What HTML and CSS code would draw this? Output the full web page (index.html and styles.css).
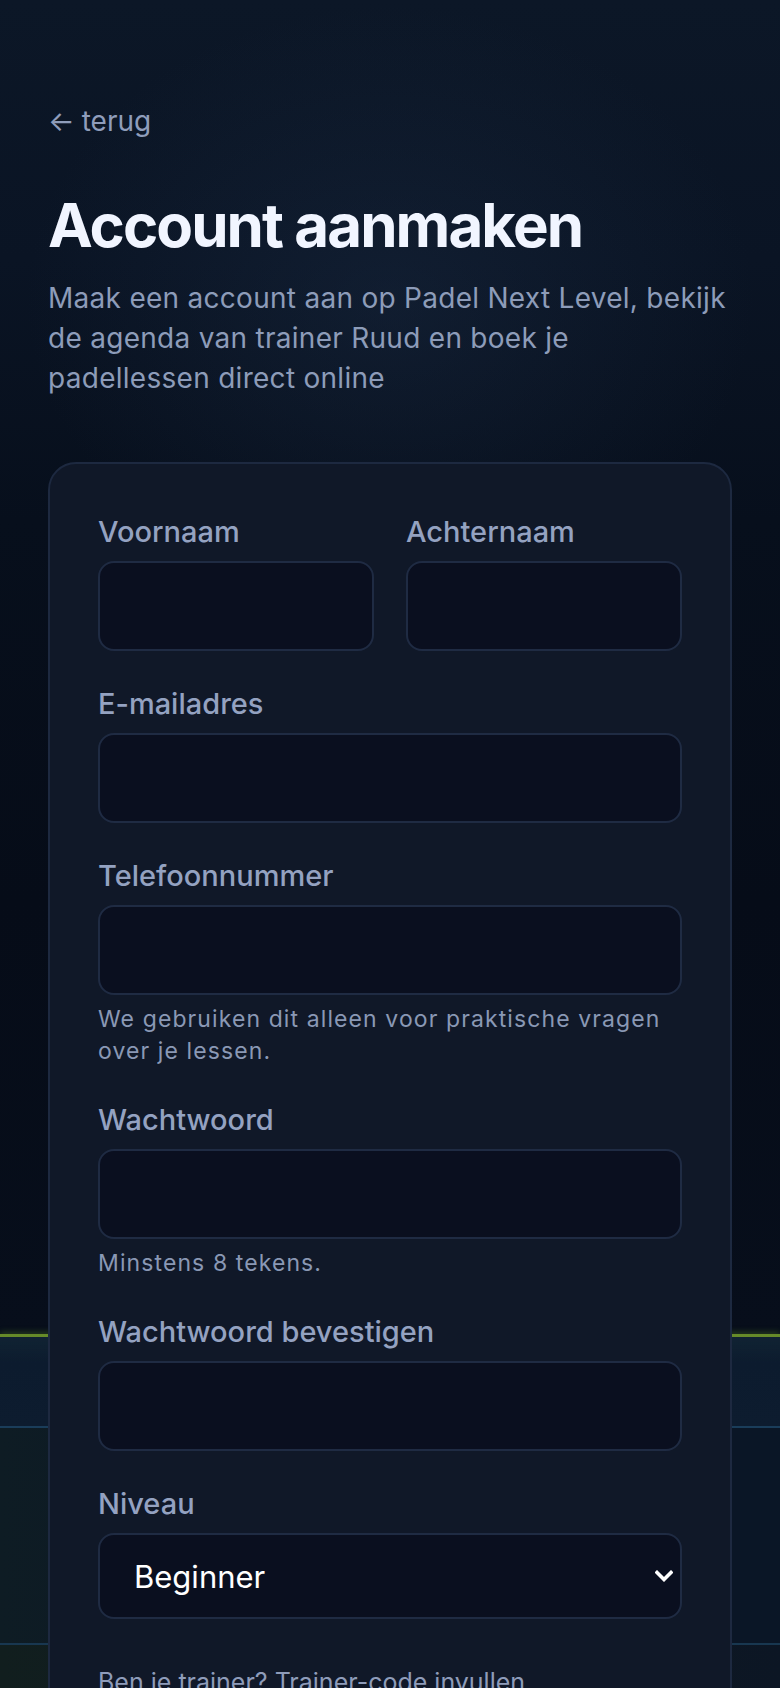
FILE: index.html
```html
<!DOCTYPE html>
<html lang="nl">
<head>
<meta charset="utf-8">
<title>Account aanmaken – Padel Next Level</title>
<link rel="stylesheet" href="styles.css">
</head>
<body>
<div class="court" aria-hidden="true">
  <div class="court-band band-a"></div>
  <div class="court-band band-b"></div>
  <div class="court-band band-c"></div>
</div>
<main class="page">
  <a class="back" href="#"><span class="back-arrow">←</span>terug</a>
  <h1 class="title">Account aanmaken</h1>
  <p class="intro">Maak een account aan op Padel Next Level, bekijk de agenda van trainer Ruud en boek je padellessen direct online</p>

  <form class="card">
    <div class="row">
      <div class="field">
        <label class="label" for="fn">Voornaam</label>
        <input class="input" id="fn" type="text">
      </div>
      <div class="field">
        <label class="label" for="ln">Achternaam</label>
        <input class="input" id="ln" type="text">
      </div>
    </div>
    <div class="field">
      <label class="label" for="em">E-mailadres</label>
      <input class="input" id="em" type="email">
    </div>
    <div class="field">
      <label class="label" for="tel">Telefoonnummer</label>
      <input class="input" id="tel" type="tel">
      <p class="help">We gebruiken dit alleen voor praktische vragen over je lessen.</p>
    </div>
    <div class="field">
      <label class="label" for="pw">Wachtwoord</label>
      <input class="input" id="pw" type="password">
      <p class="help">Minstens 8 tekens.</p>
    </div>
    <div class="field">
      <label class="label" for="pw2">Wachtwoord bevestigen</label>
      <input class="input" id="pw2" type="password">
    </div>
    <div class="field">
      <label class="label" for="lvl">Niveau</label>
      <div class="select-wrap">
        <select class="select" id="lvl">
          <option>Beginner</option>
          <option>Gevorderd</option>
          <option>Expert</option>
        </select>
        <svg class="chev" viewBox="0 0 18 12" width="18" height="12"><path d="M2 2.5 L9 9.5 L16 2.5" fill="none" stroke="#ffffff" stroke-width="3.6" stroke-linecap="square"/></svg>
      </div>
    </div>
    <p class="trainer">Ben je trainer? Trainer-code invullen</p>
    <button class="submit" type="submit">Account aanmaken</button>
  </form>
</main>
</body>
</html>
```

FILE: styles.css
```css
* { box-sizing: border-box; }

html { background: #070e1a; }

body {
  margin: 0;
  position: relative;
  min-height: 1688px;
  font-family: Inter, "Noto Sans", "Liberation Sans", sans-serif;
  color: #e8eefb;
  background:
    radial-gradient(ellipse 520px 420px at 50% 300px, rgba(30, 48, 74, 0.35), rgba(30, 48, 74, 0) 70%),
    linear-gradient(180deg, #0c1727 0px, #0a1424 260px, #070f1c 520px, #060c18 900px, #070e1b 1336px);
  background-repeat: no-repeat;
}

.court {
  position: absolute;
  left: 0;
  right: 0;
  top: 1334px;
  height: 420px;
  z-index: 0;
}

.court-band { width: 100%; }

.band-a {
  height: 94px;
  border-top: 3px solid rgba(132, 176, 40, 0.75);
  box-shadow: 0 -2px 6px rgba(132, 190, 40, 0.25);
  background: linear-gradient(180deg, rgba(24, 52, 70, 0.55), #0c1b2e 30%, #0d1c2f);
  border-bottom: 2px solid #1a3d5a;
}

.band-b {
  height: 217px;
  background: linear-gradient(90deg, #0e1c24 0%, #0c1826 40%, #0a1626 70%, #0a1626 100%);
  border-bottom: 2px solid #183750;
}

.band-c {
  height: 110px;
  background: linear-gradient(90deg, #111e1e 0%, #0f1a22 50%, #0c1624 100%);
}

.page {
  position: relative;
  z-index: 1;
  padding: 100px 48px 80px;
}

.back {
  display: inline-block;
  font-size: 28px;
  line-height: 42px;
  color: #8f9dbb;
  text-decoration: none;
}

.back-arrow {
  display: inline-block;
  margin-right: 7px;
}

.title {
  margin: 50px 0 20px;
  font-size: 60px;
  line-height: 66px;
  font-weight: 700;
  letter-spacing: -0.032em;
  color: #f1f5ff;
}

.intro {
  margin: 0 0 64px;
  max-width: 680px;
  font-size: 28px;
  line-height: 40px;
  letter-spacing: 0.01em;
  color: #8d9cb9;
}

.card {
  background: #101828;
  border: 2px solid #1d2940;
  border-radius: 28px;
  padding: 47px 48px 48px;
  display: flex;
  flex-direction: column;
  gap: 32px;
}

.row {
  display: grid;
  grid-template-columns: 1fr 1fr;
  gap: 32px;
}

.field {
  display: flex;
  flex-direction: column;
  min-width: 0;
}

.label {
  font-size: 29px;
  line-height: 42px;
  font-weight: 500;
  color: #94a2c1;
  margin-bottom: 8px;
}

.input {
  height: 90px;
  width: 100%;
  background: #0a0f1f;
  border: 2px solid #1f2b43;
  border-radius: 16px;
  color: #f1f5ff;
  font-family: inherit;
  font-size: 32px;
  padding: 0 32px;
  outline: none;
}

.help {
  margin: 8px 0 0;
  font-size: 23px;
  line-height: 32px;
  color: #8a98b5;
  letter-spacing: 1.1px;
}

.select-wrap {
  position: relative;
}

.select {
  -webkit-appearance: none;
  appearance: none;
  width: 100%;
  height: 86px;
  background: #0a0f1f;
  border: 2px solid #1f2b43;
  border-radius: 16px;
  color: #ffffff;
  font-family: inherit;
  font-size: 31px;
  padding: 0 60px 0 34px;
  outline: none;
}

.chev {
  position: absolute;
  right: 9px;
  top: 37px;
  pointer-events: none;
}

.trainer {
  margin: 12px 0 0;
  font-size: 25px;
  line-height: 38px;
  color: #8e9cba;
}

.submit {
  height: 90px;
  border: 0;
  border-radius: 16px;
  background: #a3e635;
  color: #0a0f1f;
  font-family: inherit;
  font-size: 30px;
  font-weight: 700;
}
```
